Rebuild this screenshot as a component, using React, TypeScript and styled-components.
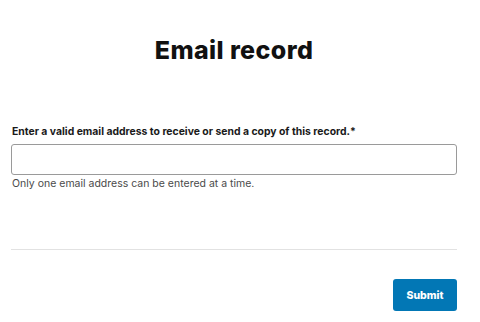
import styled, { createGlobalStyle } from 'styled-components';

const GlobalStyle = createGlobalStyle`
	html, body {
		margin: 0;
		padding: 0;
		background: #ffffff;
	}
	body {
		font-family: Inter, "Liberation Sans", sans-serif;
		color: #1a1a1a;
	}
`;

const Page = styled.form`
	display: flex;
	flex-direction: column;
	padding: 0 23px 0 11px;
`;

const Title = styled.h1`
	margin: 35px 0 0;
	font-size: 25px;
	line-height: 30px;
	font-weight: 800;
	letter-spacing: 0.4px;
	text-align: center;
	color: #111;
`;

const Field = styled.div`
	display: flex;
	flex-direction: column;
	margin-top: 60px;
`;

const Label = styled.label`
	padding-left: 1px;
	font-size: 10.4px;
	line-height: 14px;
	font-weight: 700;
	color: #1a1a1a;
`;

const Input = styled.input`
	box-sizing: border-box;
	height: 31px;
	margin-top: 5px;
	border: 1px solid #9a9a9a;
	border-radius: 3px;
	padding: 0 8px;
	font: inherit;
	font-size: 12px;
	outline: none;
`;

const Hint = styled.span`
	margin-top: 2px;
	padding-left: 1px;
	font-size: 10.5px;
	line-height: 14px;
	color: #4a4a4a;
`;

const Divider = styled.hr`
	margin: 58px 0 0;
	border: 0;
	border-top: 1px solid #e2e2e2;
	height: 0;
`;

const Actions = styled.div`
	display: flex;
	justify-content: flex-end;
	margin-top: 29px;
`;

const Button = styled.button`
	width: 64px;
	height: 32px;
	border: 0;
	border-radius: 3px;
	background: #0277b5;
	color: #fff;
	font-family: inherit;
	font-size: 10.5px;
	font-weight: 800;
	cursor: pointer;
`;

export default function App() {
	return (
		<>
			<GlobalStyle />
			<Page onSubmit={(e) => e.preventDefault()}>
				<Title>Email record</Title>
				<Field>
					<Label htmlFor="email">
						Enter a valid email address to receive or send a copy of this record.*
					</Label>
					<Input id="email" type="email" />
					<Hint>Only one email address can be entered at a time.</Hint>
				</Field>
				<Divider />
				<Actions>
					<Button type="submit">Submit</Button>
				</Actions>
			</Page>
		</>
	);
}
